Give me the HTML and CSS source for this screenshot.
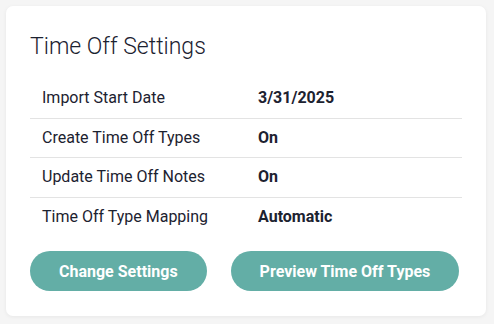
FILE: index.html
```html
<!DOCTYPE html>
<html lang="en">
<head>
  <meta charset="UTF-8">
  <meta name="viewport" content="width=device-width, initial-scale=1">
  <title>Time Off Settings</title>
  <link rel="stylesheet" href="styles.css">
</head>
<body>
  <div class="card">
    <h2 class="card-title">Time Off Settings</h2>
    <table class="settings-table">
      <tr>
        <td>Import Start Date</td>
        <td class="value">3/31/2025</td>
      </tr>
      <tr>
        <td>Create Time Off Types</td>
        <td class="value">On</td>
      </tr>
      <tr>
        <td>Update Time Off Notes</td>
        <td class="value">On</td>
      </tr>
      <tr>
        <td>Time Off Type Mapping</td>
        <td class="value">Automatic</td>
      </tr>
    </table>
    <div class="actions">
      <button class="btn">Change Settings</button>
      <button class="btn">Preview Time Off Types</button>
    </div>
  </div>
</body>
</html>
```

FILE: styles.css
```css
/* Reset & Base Styles */
* {
  box-sizing: border-box;
  margin: 0;
  padding: 0;
}
body {
  font-family: Roboto, 'Liberation Sans', sans-serif;
  background: #f5f5f5;
  color: #1c2230;
  padding: 6px 8px 8px 6px;
}
.card {
  background: #fff;
  border-radius: 7px;
  box-shadow: 0 1px 4px rgba(0,0,0,0.06);
  padding: 27px 24px 24px;
  height: 310px;
}
.card-title {
  font-size: 23px;
  font-weight: 300;
  line-height: 28px;
  color: #1c2230;
  margin-bottom: 18px;
}
/* Settings table */
.settings-table {
  width: 100%;
  border-collapse: collapse;
  font-size: 16px;
  line-height: 24px;
}
.settings-table td {
  width: 50%;
  padding: 7px 12px 7.5px;
}
.settings-table tr + tr td {
  border-top: 1px solid #e3e3e3;
}
.settings-table tr:first-child td {
  border-bottom: 1px solid #e3e3e3;
}
.settings-table .value {
  font-weight: 700;
}
/* Buttons */
.actions {
  display: flex;
  gap: 24px;
  margin-top: 15px;
}
.btn {
  background: #63aea6;
  color: #fff;
  border: none;
  height: 40px;
  padding: 0 29px;
  border-radius: 20px;
  font-family: inherit;
  font-size: 16px;
  font-weight: 700;
  cursor: pointer;
}
```
